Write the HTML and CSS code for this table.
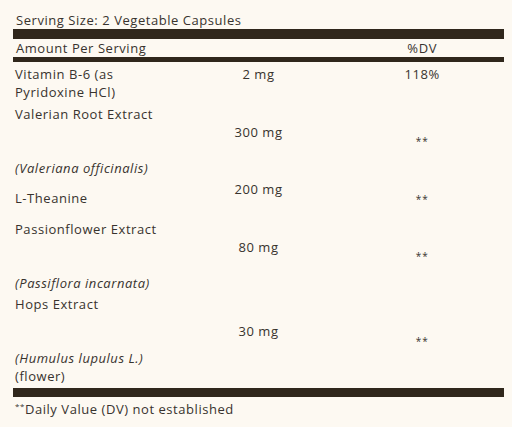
FILE: index.html
```html
<!DOCTYPE html>
<html lang="en">
<head>
    <meta charset="UTF-8">
    <meta name="viewport" content="width=device-width, initial-scale=1.0">
    <title>Supplement Facts</title>
    <link rel="stylesheet" href="styles.css">
</head>
<body>
    <div class="facts">
        <div class="serving">Serving Size: 2 Vegetable Capsules</div>
        <div class="row head">
            <div class="head-label">Amount Per Serving</div>
            <div class="dv">%DV</div>
        </div>

        <div class="row top">
            <div class="name">Vitamin B-6 (as Pyridoxine HCl)</div>
            <div class="amt">2 mg</div>
            <div class="dv">118%</div>
        </div>
        <div class="row">
            <div class="name">
                <p>Valerian Root Extract</p>
                <p class="latin">(Valeriana officinalis)</p>
            </div>
            <div class="amt">300 mg</div>
            <div class="dv"><span class="nd">**</span></div>
        </div>
        <div class="row">
            <div class="name">L-Theanine</div>
            <div class="amt">200 mg</div>
            <div class="dv"><span class="nd">**</span></div>
        </div>
        <div class="row">
            <div class="name">
                <p>Passionflower Extract</p>
                <p class="latin">(Passiflora incarnata)</p>
            </div>
            <div class="amt">80 mg</div>
            <div class="dv"><span class="nd">**</span></div>
        </div>
        <div class="row last">
            <div class="name">
                <p>Hops Extract</p>
                <p class="latin">(Humulus lupulus L.)</p>
                <p>(flower)</p>
            </div>
            <div class="amt">30 mg</div>
            <div class="dv"><span class="nd">**</span></div>
        </div>

        <div class="foot"><sup>**</sup>Daily Value (DV) not established</div>
    </div>
</body>
</html>
```

FILE: styles.css
```css
body, html {
    margin: 0;
    padding: 0;
    background-color: #fdf9f2;
}
.facts {
    margin: 0 8px 0 13px;
    font-family: "Open Sans", "Liberation Sans", sans-serif;
    font-size: 13px;
    line-height: 18px;
    letter-spacing: 0.55px;
    color: #38332e;
}
.serving {
    padding: 11px 0 0 3px;
    border-bottom: 10px solid #30271c;
}
.row {
    display: grid;
    grid-template-columns: 1fr 1fr 1fr;
    align-items: center;
    padding: 3px 0 0.5px 0;
}
.row.top {
    align-items: start;
}
.row.head {
    padding: 0;
    border-bottom: 5px solid #30271c;
}
.row.last {
    padding-bottom: 3px;
    border-bottom: 9px solid #30271c;
}
.head-label {
    grid-column: span 2;
    padding-left: 3px;
}
.name {
    padding-left: 2px;
    padding-right: 4px;
}
.name p {
    margin: 0;
}
.latin {
    margin-top: 36px !important;
    font-style: italic;
}
/* amount sits on the upper of two lines */
.amt {
    text-align: center;
    padding-bottom: 18px;
}
.dv {
    text-align: center;
}
.nd {
    font-size: 10px;
    letter-spacing: 1px;
}
.foot {
    padding: 3px 0 0 2px;
}
.foot sup {
    font-size: 8px;
    line-height: 0;
}
```
